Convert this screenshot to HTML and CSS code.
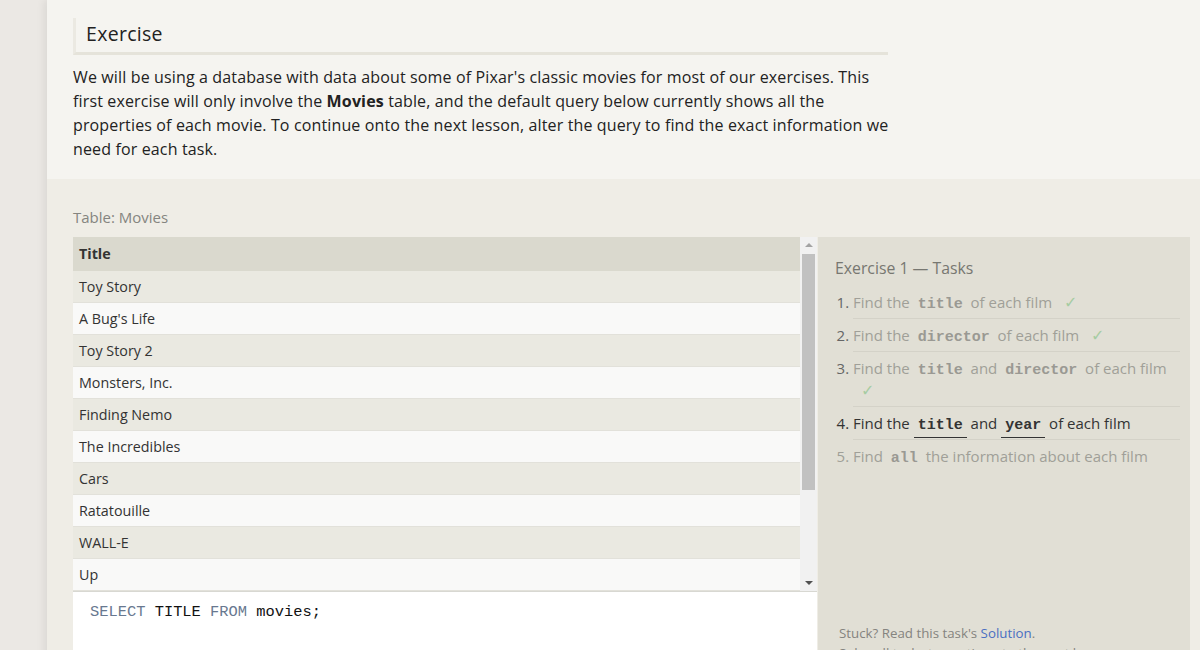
FILE: index.html
```html
<!DOCTYPE html>
<html>
<head>
<meta charset="utf-8">
<link rel="stylesheet" href="styles.css">
</head>
<body>
<div class="page">
  <section class="intro">
    <div class="heading">Exercise</div>
    <p class="lead">We will be using a database with data about some of Pixar's classic movies for most of our exercises. This first exercise will only involve the <strong>Movies</strong> table, and the default query below currently shows all the properties of each movie. To continue onto the next lesson, alter the query to find the exact information we need for each task.</p>
  </section>
  <section class="workspace">
    <div class="table-label">Table: Movies</div>
    <div class="work-row">
      <div class="left-col">
        <div class="table-wrap">
          <div class="table">
            <div class="th">Title</div>
            <div class="tr odd">Toy Story</div>
            <div class="tr even">A Bug's Life</div>
            <div class="tr odd">Toy Story 2</div>
            <div class="tr even">Monsters, Inc.</div>
            <div class="tr odd">Finding Nemo</div>
            <div class="tr even">The Incredibles</div>
            <div class="tr odd">Cars</div>
            <div class="tr even">Ratatouille</div>
            <div class="tr odd">WALL-E</div>
            <div class="tr even">Up</div>
          </div>
          <div class="scrollbar">
            <div class="arrow up"></div>
            <div class="track"><div class="thumb"></div></div>
            <div class="arrow down"></div>
          </div>
        </div>
        <div class="editor"><span class="kw">SELECT</span> TITLE <span class="kw">FROM</span> movies;</div>
      </div>
      <aside class="tasks">
        <div class="tasks-title">Exercise 1 — Tasks</div>
        <ol class="task-list">
          <li class="done">Find the <code>title</code> of each film <span class="check">✓</span></li>
          <li class="done">Find the <code>director</code> of each film <span class="check">✓</span></li>
          <li class="done">Find the <code>title</code> and <code>director</code> of each film <span class="check">✓</span></li>
          <li class="active">Find the <code>title</code> and <code>year</code> of each film</li>
          <li class="todo last">Find <code>all</code> the information about each film</li>
        </ol>
        <div class="help">
          <p>Stuck? Read this task's <a href="#">Solution</a>.</p>
          <p>Solve all tasks to continue to the next lesson.</p>
        </div>
      </aside>
    </div>
  </section>
</div>
</body>
</html>
```
FILE: styles.css
```css
html, body {
  margin: 0;
  padding: 0;
  height: 100%;
  overflow: hidden;
}
body {
  background: #ebe8e4;
  font-family: "Open Sans", "Noto Sans", sans-serif;
  color: #222;
}
.page {
  margin-left: 47px;
  min-height: 100%;
  box-shadow: -3px 0 8px rgba(0, 0, 0, 0.07);
  background: #efede6;
}
.intro {
  background: #f5f4f0;
  padding: 18px 26px 18px;
}
.heading {
  width: 802px;
  border-left: 3px solid #ebe9e2;
  border-bottom: 3px solid #e5e3da;
  padding: 2px 0 4px 10px;
  font-size: 19.5px;
  line-height: 28px;
  letter-spacing: 0.3px;
  color: #222;
}
.lead {
  margin: 10px 0 0;
  width: 828px;
  font-size: 16px;
  letter-spacing: 0.14px;
  line-height: 24px;
  color: #222;
}
.lead strong { font-weight: 700; }
.workspace {
  padding: 28px 10px 0 26px;
}
.table-label {
  font-size: 15px;
  line-height: 20px;
  color: #858580;
  margin-bottom: 10px;
}
.work-row {
  display: flex;
  align-items: stretch;
}
.left-col {
  width: 744px;
  flex-shrink: 0;
  display: flex;
  flex-direction: column;
}
.table-wrap {
  display: flex;
  height: 354px;
  overflow: hidden;
}
.table {
  flex: 1;
  font-size: 14.3px;
}
.th {
  height: 34px;
  line-height: 34px;
  background: #dad9ce;
  font-weight: 700;
  color: #333;
  padding-left: 6px;
}
.tr {
  height: 31px;
  line-height: 31px;
  border-bottom: 1px solid #e2e1da;
  padding-left: 6px;
  color: #333;
}
.tr.odd { background: #eae9e1; }
.tr.even { background: #f9f9f8; }
.scrollbar {
  width: 17px;
  background: #f1f1f1;
  display: flex;
  flex-direction: column;
}
.arrow {
  height: 17px;
  position: relative;
}
.arrow::after {
  content: "";
  position: absolute;
  left: 5px;
  border-left: 4px solid transparent;
  border-right: 4px solid transparent;
}
.arrow.up::after {
  top: 6px;
  border-bottom: 4px solid #a3a3a3;
}
.arrow.down::after {
  top: 7px;
  border-top: 4px solid #505050;
}
.track {
  flex: 1;
  padding: 0 2px;
}
.thumb {
  height: 236px;
  background: #c1c1c1;
}
.editor {
  flex: 1;
  background: #fff;
  border-top: 1px solid #d8d8d2;
  padding: 9px 17px;
  min-height: 60px;
  font-family: "Liberation Mono", monospace;
  font-size: 15.4px;
  line-height: 22px;
  color: #111;
}
.kw { color: #687890; }
.tasks {
  flex: 1;
  margin-left: 1px;
  background: #e1dfd5;
  padding: 20px 10px 0 17px;
  height: 420px;
}
.tasks-title {
  font-size: 15.8px;
  line-height: 22px;
  color: #777771;
}
.task-list {
  margin: 7px 0 0;
  padding-left: 18px;
  font-size: 15px;
  line-height: 22px;
}
.task-list li {
  padding: 5px 0;
  border-bottom: 1px solid #d4d2c8;
  color: #a09f98;
}
.task-list li::marker { color: #666; }
.task-list li.todo::marker, .task-list li.active::marker { color: inherit; }
.task-list li.last { border-bottom: none; }
.task-list li.active { color: #333; }
.task-list code {
  font-family: "Liberation Mono", monospace;
  font-weight: 700;
  font-size: 15px;
  line-height: 1;
  padding: 0 4px;
  color: #9a9993;
}
.task-list li.active code {
  color: #333;
  border-bottom: 1px solid #333;
  padding-bottom: 3px;
}
.check {
  color: #a6cca2;
  margin-left: 8px;
  font-family: "DejaVu Sans", sans-serif;
  font-size: 16px;
  line-height: 1;
}
.help {
  margin-top: 151px;
  font-size: 13.3px;
  line-height: 20px;
  color: #85847f;
  padding-left: 4px;
}
.help p { margin: 0; }
.help a { color: #4a6fc2; text-decoration: none; }
```
